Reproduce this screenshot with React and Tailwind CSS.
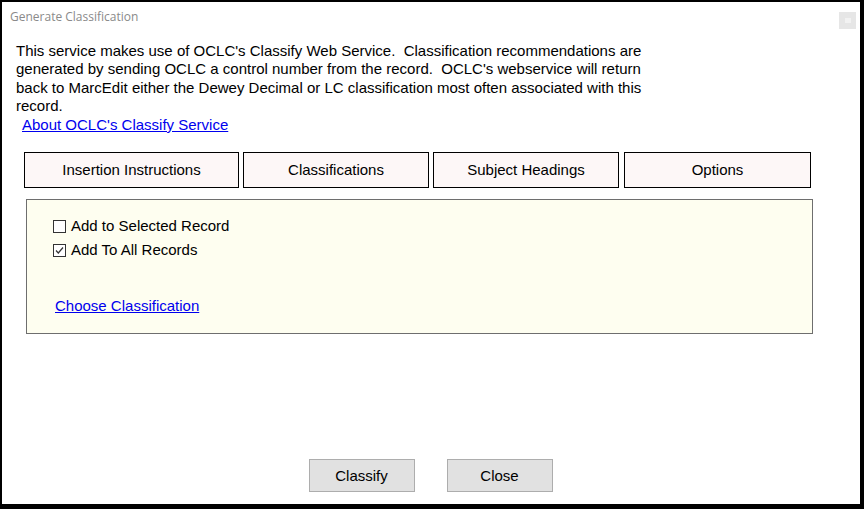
import React from 'react';

const tabs = ['Insertion Instructions', 'Classifications', 'Subject Headings', 'Options'];

function Checkbox({ checked }) {
	return (
		<span className="w-[13px] h-[13px] border border-[#333] bg-white flex items-center justify-center shrink-0">
			{checked && (
				<svg width="11" height="11" viewBox="0 0 11 11">
					<path d="M2 5.5 L4.3 8 L9 2.5" fill="none" stroke="#333" strokeWidth="1.2" />
				</svg>
			)}
		</span>
	);
}

export default function App() {
	return (
		<div
			className="w-[864px] h-[509px] bg-black pt-[2px] pl-[2px] pr-[4px] pb-[5px]"
			style={{ fontFamily: '"Liberation Sans", Arial, sans-serif' }}
		>
			<div className="w-full h-full bg-white flex flex-col">
				{/* barra de titulo */}
				<div className="flex items-start justify-between h-[40px] pl-[8px] pr-[4px] pt-[9px]">
					<span className="text-[12px] text-[#8a8a8a] leading-none" style={{ fontFamily: '"Open Sans", "Noto Sans", sans-serif' }}>
						Generate Classification
					</span>
					<span className="w-[17px] h-[17px] bg-[#e6e6e6] mt-[1px] flex items-center justify-center">
						<span className="w-[6px] h-[5px] bg-[#f2f2f2]" />
					</span>
				</div>

				<div className="pl-[14px] text-[15px] leading-[18.4px] text-black w-[650px]">
					This service makes use of OCLC's Classify Web Service.&nbsp; Classification recommendations are generated by sending
					OCLC a control number from the record.&nbsp; OCLC's webservice will return back to MarcEdit either the Dewey Decimal
					or LC classification most often associated with this record.
				</div>
				<div className="pl-[20px] text-[15px] leading-[18px]">
					<span className="text-[#0000ee] underline">About OCLC's Classify Service</span>
				</div>

				<div className="flex pl-[22px] mt-[18px]">
					{tabs.map((t, i) => (
						<div
							key={t}
							className={`h-[36px] pt-[2px] border border-black bg-[#fdf7f7] flex items-center justify-center text-[15px] ${
								i === 0 ? 'w-[215px]' : i === 3 ? 'w-[187px] ml-[5px]' : 'w-[186px] ml-[4px]'
							}`}
						>
							{t}
						</div>
					))}
				</div>

				<div className="ml-[24px] mt-[11px] w-[787px] h-[135px] border border-[#6e6e6e] bg-[#fefef0] pl-[26px] pt-[18px]">
					<div className="flex flex-col gap-[6px] text-[15px]">
						<div className="flex items-center gap-[5px] h-[18px]">
							<Checkbox />
							<span>Add to Selected Record</span>
						</div>
						<div className="flex items-center gap-[5px] h-[18px]">
							<Checkbox checked />
							<span>Add To All Records</span>
						</div>
					</div>
					<div className="mt-[37px] pl-[2px] text-[15px] leading-[18px]">
						<span className="text-[#0000ee] underline">Choose Classification</span>
					</div>
				</div>

				<div className="flex-1" />
				<div className="flex justify-center gap-[32px] pb-[12px] pr-[1px]">
					<button className="w-[106px] h-[33px] pt-[1px] bg-[#e1e1e1] border border-[#adadad] text-[15px]">Classify</button>
					<button className="w-[106px] h-[33px] pt-[1px] bg-[#e1e1e1] border border-[#adadad] text-[15px]">Close</button>
				</div>
			</div>
		</div>
	);
}
